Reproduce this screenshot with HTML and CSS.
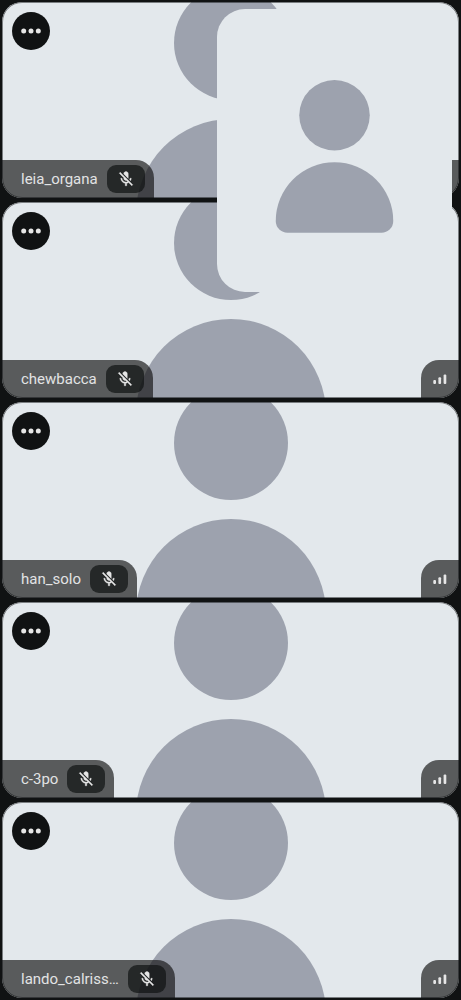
FILE: index.html
```
<!DOCTYPE html>
<html lang="en">
<head>
<meta charset="utf-8">
<meta name="viewport" content="width=device-width, initial-scale=1">
<title>Call</title>
<link rel="stylesheet" href="styles.css">
</head>
<body>
<svg class="defs" aria-hidden="true">
  <symbol id="avatar" viewBox="0 0 200 200">
    <circle cx="100" cy="70" r="30"/>
    <path d="M100 110a50 50 0 0 1 50 50a10 10 0 0 1-10 10H60a10 10 0 0 1-10-10a50 50 0 0 1 50-50z"/>
  </symbol>
  <symbol id="dots" viewBox="0 0 20 20">
    <circle cx="2.7" cy="10" r="2.5"/><circle cx="10" cy="10" r="2.5"/><circle cx="17.3" cy="10" r="2.5"/>
  </symbol>
  <symbol id="mic-off" viewBox="0 0 24 24">
    <path d="M19 11h-1.7c0 .74-.16 1.43-.43 2.05l1.23 1.23c.56-.98.9-2.09.9-3.28zm-4.02.17c0-.06.02-.11.02-.17V5c0-1.66-1.34-3-3-3S9 3.34 9 5v.18l5.98 5.99zM4.27 3L3 4.27l6.01 6.01V11c0 1.66 1.33 3 2.99 3 .22 0 .44-.03.65-.08l1.66 1.66c-.71.33-1.5.52-2.31.52-2.76 0-5.3-2.1-5.3-5.1H5c0 3.41 2.72 6.23 6 6.72V21h2v-3.28c.91-.13 1.77-.45 2.54-.9L19.73 21 21 19.73 4.27 3z"/>
  </symbol>
  <symbol id="signal" viewBox="0 0 14 10">
    <rect x="0.3" y="6" width="2.7" height="4" rx="1"/><rect x="5.4" y="3.3" width="2.7" height="6.7" rx="1"/><rect x="10.6" y="0.4" width="2.7" height="9.6" rx="1"/>
  </symbol>
</svg>
<main class="call">
  <section class="tile">
    <svg class="tile-avatar" aria-hidden="true"><use href="#avatar"/></svg>
    <button class="menu" type="button" aria-label="Options for leia_organa"><svg aria-hidden="true"><use href="#dots"/></svg></button>
    <div class="info"><span class="name">leia_organa</span><span class="muted"><svg aria-hidden="true"><use href="#mic-off"/></svg></span></div>
    <div class="quality"><svg aria-hidden="true"><use href="#signal"/></svg></div>
  </section>
  <section class="tile">
    <svg class="tile-avatar" aria-hidden="true"><use href="#avatar"/></svg>
    <button class="menu" type="button" aria-label="Options for chewbacca"><svg aria-hidden="true"><use href="#dots"/></svg></button>
    <div class="info"><span class="name">chewbacca</span><span class="muted"><svg aria-hidden="true"><use href="#mic-off"/></svg></span></div>
    <div class="quality"><svg aria-hidden="true"><use href="#signal"/></svg></div>
  </section>
  <section class="tile">
    <svg class="tile-avatar" aria-hidden="true"><use href="#avatar"/></svg>
    <button class="menu" type="button" aria-label="Options for han_solo"><svg aria-hidden="true"><use href="#dots"/></svg></button>
    <div class="info"><span class="name">han_solo</span><span class="muted"><svg aria-hidden="true"><use href="#mic-off"/></svg></span></div>
    <div class="quality"><svg aria-hidden="true"><use href="#signal"/></svg></div>
  </section>
  <section class="tile">
    <svg class="tile-avatar" aria-hidden="true"><use href="#avatar"/></svg>
    <button class="menu" type="button" aria-label="Options for c-3po"><svg aria-hidden="true"><use href="#dots"/></svg></button>
    <div class="info"><span class="name">c-3po</span><span class="muted"><svg aria-hidden="true"><use href="#mic-off"/></svg></span></div>
    <div class="quality"><svg aria-hidden="true"><use href="#signal"/></svg></div>
  </section>
  <section class="tile">
    <svg class="tile-avatar" aria-hidden="true"><use href="#avatar"/></svg>
    <button class="menu" type="button" aria-label="Options for lando_calriss…"><svg aria-hidden="true"><use href="#dots"/></svg></button>
    <div class="info"><span class="name">lando_calriss…</span><span class="muted"><svg aria-hidden="true"><use href="#mic-off"/></svg></span></div>
    <div class="quality"><svg aria-hidden="true"><use href="#signal"/></svg></div>
  </section>
  <aside class="self-view" aria-label="Your video"><svg aria-hidden="true"><use href="#avatar"/></svg></aside>
</main>
</body>
</html>
```
FILE: styles.css
```
* { box-sizing: border-box; }

body {
  margin: 0;
  background: #101213;
  font-family: Roboto, "Liberation Sans", sans-serif;
}

.defs { position: absolute; width: 0; height: 0; }

.call {
  position: relative;
  display: grid;
  grid-auto-rows: minmax(120px, 1fr);
  gap: 4px;
  min-height: 100vh;
  padding: 2px;
}

.tile {
  position: relative;
  display: flex;
  align-items: flex-end;
  justify-content: space-between;
  overflow: hidden;
  border-radius: 20px;
  background: #e3e8ec;
}

/* soft rim around each participant */
.tile::after {
  content: "";
  position: absolute;
  inset: 0;
  border: 1px solid rgba(16, 18, 19, 0.5);
  border-radius: 20px;
  pointer-events: none;
}

.tile-avatar {
  position: absolute;
  top: 50%;
  left: 50%;
  width: 380px;
  height: 380px;
  transform: translate(-50%, -50%);
  fill: #9da2ae;
}

.menu {
  position: absolute;
  top: 10px;
  left: 10px;
  display: grid;
  place-items: center;
  width: 38px;
  height: 38px;
  padding: 0;
  border: 0;
  border-radius: 50%;
  background: #101213;
}

.menu svg { width: 20px; height: 20px; fill: #e6e6e6; }

.info,
.quality {
  position: relative;
  display: flex;
  align-items: center;
  height: 38px;
  background: rgba(16, 15, 16, 0.65);
}

.info {
  gap: 9px;
  padding: 0 9px 0 19px;
  border-top-right-radius: 18px;
}

.name {
  color: #e2e3e4;
  font-size: 15px;
  line-height: 20px;
}

.muted {
  display: grid;
  place-items: center;
  width: 38px;
  height: 28px;
  border-radius: 9px;
  background: rgba(16, 18, 19, 0.7);
}

.muted svg {
  width: 18px;
  height: 18px;
  fill: #e6e6e6;
  stroke: #e6e6e6;
  stroke-width: 0.5;
}

.quality {
  justify-content: center;
  width: 38px;
  border-top-left-radius: 18px;
}

.quality svg { width: 14px; height: 10px; fill: #e6e6e6; }

.self-view {
  position: absolute;
  top: 9px;
  right: 9px;
  display: grid;
  place-items: center;
  width: 235px;
  height: 283px;
  border-radius: 28px 0 0 28px;
  background: #e3e8ec;
}

.self-view svg { width: 235px; height: 235px; fill: #9da2ae; }
```
